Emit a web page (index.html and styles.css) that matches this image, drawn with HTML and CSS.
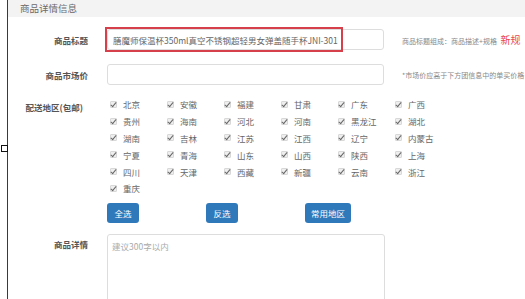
FILE: index.html
```html
<!DOCTYPE html>
<html lang="zh-CN">
<head>
  <meta charset="UTF-8">
  <meta name="viewport" content="width=device-width, initial-scale=1.0">
  <title>商品详情信息</title>
  <link rel="stylesheet" href="styles.css">
</head>
<body>
  <div class="panel">
    <span class="handle"></span>
    <div class="panel-title">商品详情信息</div>

    <div class="form">
      <div class="row">
        <label class="row-label">商品标题</label>
        <div class="field">
          <input type="text" class="text-input" value="膳魔师保温杯350ml真空不锈钢超轻男女弹盖随手杯JNI-301">
          <span class="mark"></span>
        </div>
        <span class="hint">商品标题组成：商品描述+规格 <em class="hint-new">新规</em></span>
      </div>

      <div class="row">
        <label class="row-label">商品市场价</label>
        <div class="field">
          <input type="text" class="text-input">
        </div>
        <span class="hint">*市场价应高于下方团信息中的单买价格</span>
      </div>

      <div class="row row-top">
        <label class="row-label row-label-regions">配送地区(包邮)</label>
        <div class="regions" id="regions"></div>
      </div>

      <div class="actions">
        <button class="btn">全选</button>
        <button class="btn">反选</button>
        <button class="btn">常用地区</button>
      </div>

      <div class="row row-top">
        <label class="row-label row-label-detail">商品详情</label>
        <textarea class="detail" placeholder="建议300字以内"></textarea>
      </div>
    </div>
  </div>

  <script>
    const regions = [
      '北京', '安徽', '福建', '甘肃', '广东', '广西',
      '贵州', '海南', '河北', '河南', '黑龙江', '湖北',
      '湖南', '吉林', '江苏', '江西', '辽宁', '内蒙古',
      '宁夏', '青海', '山东', '山西', '陕西', '上海',
      '四川', '天津', '西藏', '新疆', '云南', '浙江',
      '重庆'
    ];

    const box = document.getElementById('regions');
    regions.forEach(name => {
      const label = document.createElement('label');
      label.className = 'region';
      label.innerHTML = `<input type="checkbox" checked><span>${name}</span>`;
      box.appendChild(label);
    });
  </script>
</body>
</html>
```

FILE: styles.css
```css
body {
  margin: 0;
  font-family: "Noto Sans CJK SC", "Liberation Sans", sans-serif;
  background: #fff;
  overflow: hidden;
}
.panel {
  position: relative;
  margin-left: 7px;
  border-left: 1px solid #3a3a3a;
  min-height: 299px;
}
.handle {
  position: absolute;
  left: -7px;
  top: 145px;
  width: 5px;
  height: 5px;
  border: 1px solid #111;
  background: #fff;
}
.panel-title {
  height: 17px;
  line-height: 17px;
  padding-left: 12px;
  background: #f3f3f3;
  color: #6a6a6a;
  font-size: 9.5px;
}
.form {
  padding-top: 12px;
}
.row {
  display: flex;
  align-items: center;
  margin-bottom: 14px;
  white-space: nowrap;
}
.row-top { align-items: flex-start; }
.row-label {
  flex: none;
  width: 80px;
  margin-right: 19px;
  text-align: right;
  font-size: 8.5px;
  font-weight: bold;
  color: #555;
}
.row-label-regions {
  width: 75px;
  margin-right: 24px;
  line-height: 16.8px;
}
.row-label-detail { padding-top: 4px; }
.field {
  position: relative;
  flex: none;
}
.text-input {
  display: block;
  box-sizing: border-box;
  width: 277px;
  height: 21px;
  margin: 0;
  padding: 0 5px;
  border: 1px solid #ddd;
  border-radius: 3px;
  font-family: inherit;
  font-size: 8.5px;
  color: #666;
}
.mark {
  position: absolute;
  left: -2px;
  top: -2px;
  width: 234px;
  height: 21px;
  border: 2px solid #d6404a;
}
.hint {
  margin-left: 18px;
  font-size: 7px;
  color: #888;
}
.hint-new {
  font-style: normal;
  font-size: 10px;
  color: #e8454f;
  margin-left: 2px;
}
.regions {
  display: grid;
  grid-template-columns: repeat(6, 57px);
  grid-auto-rows: 16.8px;
  margin-top: -3px;
}
.region {
  display: flex;
  align-items: center;
  font-size: 8.5px;
  color: #666;
}
.region input {
  appearance: none;
  position: relative;
  width: 7px;
  height: 7px;
  margin: 0 6px 0 3px;
  background: #eee;
  border: 1px solid #d8d8d8;
  border-radius: 1px;
}
.region input:checked::after {
  content: "";
  position: absolute;
  left: 1px;
  top: -1px;
  width: 2px;
  height: 5px;
  border: solid #666;
  border-width: 0 1.5px 1.5px 0;
  transform: rotate(40deg);
}
.actions {
  display: flex;
  gap: 67px;
  margin: -8px 0 11px 99px;
}
.btn {
  height: 20px;
  min-width: 32px;
  padding: 0 6px;
  border: none;
  border-radius: 3px;
  background: #2f79bb;
  color: #fff;
  font-family: inherit;
  font-size: 8.5px;
}
.detail {
  box-sizing: border-box;
  width: 278px;
  height: 80px;
  margin: 0;
  padding: 5px 4px;
  border: 1px solid #ddd;
  border-radius: 3px;
  resize: none;
  font-family: inherit;
  font-size: 8.5px;
}
.detail::placeholder { color: #aaa; }
```
